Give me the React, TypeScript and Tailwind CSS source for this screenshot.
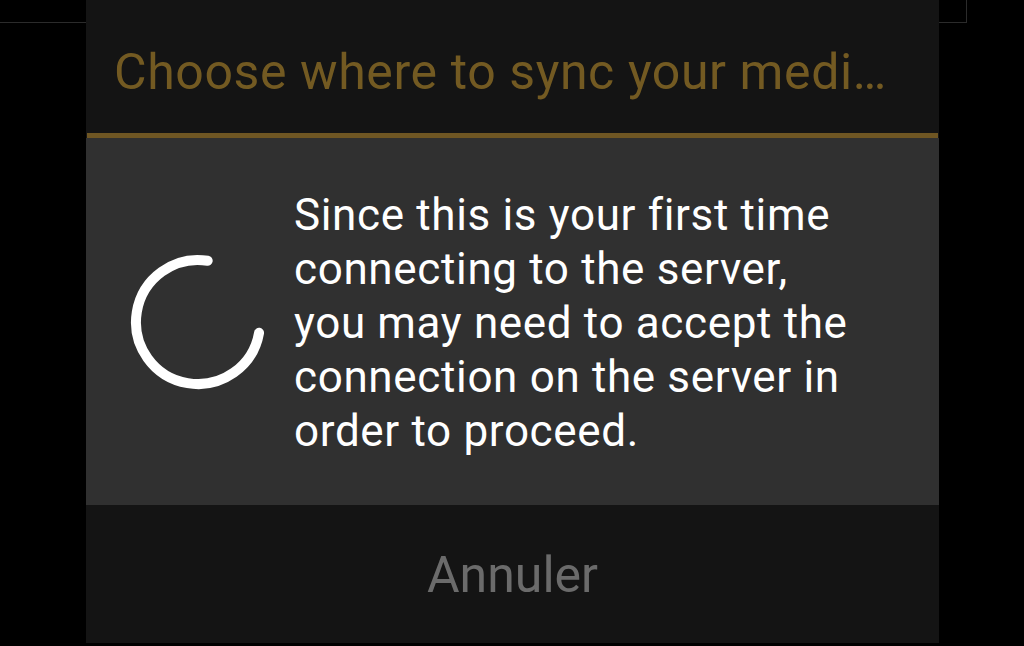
import React from "react";

export default function App() {
  return (
    <div
      className="relative w-[1024px] h-[646px] bg-black overflow-hidden"
      style={{ fontFamily: "Roboto, 'Noto Sans', sans-serif" }}
    >
      {/* background page fragment behind the dialog */}
      <div className="absolute left-0 top-0 w-[967px] h-[23px] border-r border-b border-[#2b2b2b]" />

      <div className="relative ml-[86px] w-[853px] flex flex-col">
        {/* header */}
        <div className="h-[133px] bg-[#141414] flex items-start pl-[28px] pt-[38px]">
          <div className="text-[50px] leading-[68px] text-[#735a22] whitespace-nowrap tracking-[0.6px]">
            Choose where to sync your medi…
          </div>
        </div>
        <div className="h-[5px] bg-[#141414] px-[1px]">
          <div className="h-full bg-[#6f5623]" />
        </div>

        {/* content */}
        <div className="h-[367px] bg-[#303030] flex items-center pl-[42px]">
          <svg width="140" height="140" viewBox="0 0 140 140" className="shrink-0">
            <path
              d="M79.7 8.8 A62 62 0 1 0 131.06 80.77"
              fill="none"
              stroke="#ffffff"
              strokeWidth="10"
              strokeLinecap="round"
            />
          </svg>
          <div className="ml-[26px] text-[44px] leading-[54px] text-white pt-[3px] tracking-[0.65px] whitespace-nowrap">
            Since this is your first time
            <br />
            connecting to the server,
            <br />
            you may need to accept the
            <br />
            connection on the server in
            <br />
            order to proceed.
          </div>
        </div>

        {/* button */}
        <div className="h-[138px] bg-[#141414] flex items-center justify-center pt-[2px]">
          <span className="text-[50px] leading-none text-[#6b6b6b]">Annuler</span>
        </div>
      </div>
    </div>
  );
}
